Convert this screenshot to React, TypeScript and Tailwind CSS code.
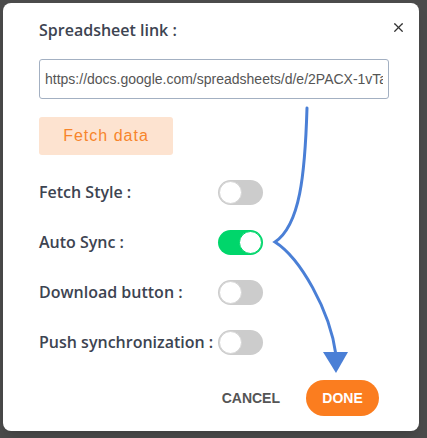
import { X } from "lucide-react";
import { useState } from "react";

interface ToggleProps {
  on: boolean;
  onChange: () => void;
}

function Toggle({ on, onChange }: ToggleProps) {
  return (
    <button
      type="button"
      onClick={onChange}
      className={`relative h-[25px] w-[45px] shrink-0 rounded-full ${
        on ? "bg-[#00d66b]" : "bg-[#cccccc]"
      }`}
    >
      <span
        className={`absolute top-px h-[23px] w-[23px] rounded-full bg-white border ${
          on ? "left-[21px] border-[#00d66b]" : "left-px border-[#d4d4d4]"
        }`}
      />
    </button>
  );
}

export default function App() {
  const [link, setLink] = useState(
    "https://docs.google.com/spreadsheets/d/e/2PACX-1vTaWx9kqL3mB0pubhtml"
  );
  const [opts, setOpts] = useState({
    fetchStyle: false,
    autoSync: true,
    download: false,
    push: false,
  });

  const rows: { key: keyof typeof opts; label: string }[] = [
    { key: "fetchStyle", label: "Fetch Style :" },
    { key: "autoSync", label: "Auto Sync :" },
    { key: "download", label: "Download button :" },
    { key: "push", label: "Push synchronization :" },
  ];

  return (
    <div className="relative h-[438px] w-[427px] overflow-hidden bg-[#4b4b4b] font-['Open_Sans',sans-serif]">
      <div className="relative ml-[3px] mt-[3px] flex h-[428px] w-[416px] flex-col rounded-lg bg-white px-9 pt-4 pb-[15px] shadow-lg">
        <button type="button" className="absolute right-[13px] top-[17px] text-[#333]">
          <X className="h-[15px] w-[15px]" strokeWidth={2} />
        </button>

        <h2 className="h-[22px] text-[16px] font-semibold leading-[22px] text-[#3d4451]">
          Spreadsheet link :
        </h2>

        <input
          type="text"
          value={link}
          onChange={(e) => setLink(e.target.value)}
          className="mt-[18px] h-10 w-[350px] rounded-[3px] border border-[#a3b0c2] px-[5px] font-['Liberation_Sans',sans-serif] text-[14px] text-[#555] outline-none"
        />

        <button
          type="button"
          className="mt-[18px] h-[38px] w-[134px] rounded-[3px] bg-[#fde3d0] font-['Liberation_Sans',sans-serif] text-[16px] tracking-[1px] text-[#f7852b]"
        >
          Fetch data
        </button>

        <div className="mt-3 flex flex-col">
          {rows.map((r) => (
            <div key={r.key} className="flex h-[50px] items-center">
              <span className="w-[179px] text-[16px] font-semibold text-[#3d4451]">
                {r.label}
              </span>
              <Toggle
                on={opts[r.key]}
                onChange={() => setOpts({ ...opts, [r.key]: !opts[r.key] })}
              />
            </div>
          ))}
        </div>

        <div className="mt-[13px] flex items-center justify-end pr-1">
          <button
            type="button"
            className="mr-[26px] font-['Liberation_Sans',sans-serif] text-[14px] font-bold text-[#555]"
          >
            CANCEL
          </button>
          <button
            type="button"
            className="h-9 w-[73px] rounded-full bg-[#fb7d1f] font-['Liberation_Sans',sans-serif] text-[14px] font-bold text-white"
          >
            DONE
          </button>
        </div>
      </div>

      <svg
        className="pointer-events-none absolute left-0 top-0"
        width="427"
        height="438"
        viewBox="0 0 427 438"
      >
        <path
          d="M307 108 C 305 175, 300 225, 275 242 C 300 258, 330 310, 336 355"
          fill="none"
          stroke="#4a7fd6"
          strokeWidth="3"
          strokeLinecap="round"
        />
        <polygon points="323,352 348,352 336,373" fill="#4a7fd6" />
      </svg>
    </div>
  );
}
